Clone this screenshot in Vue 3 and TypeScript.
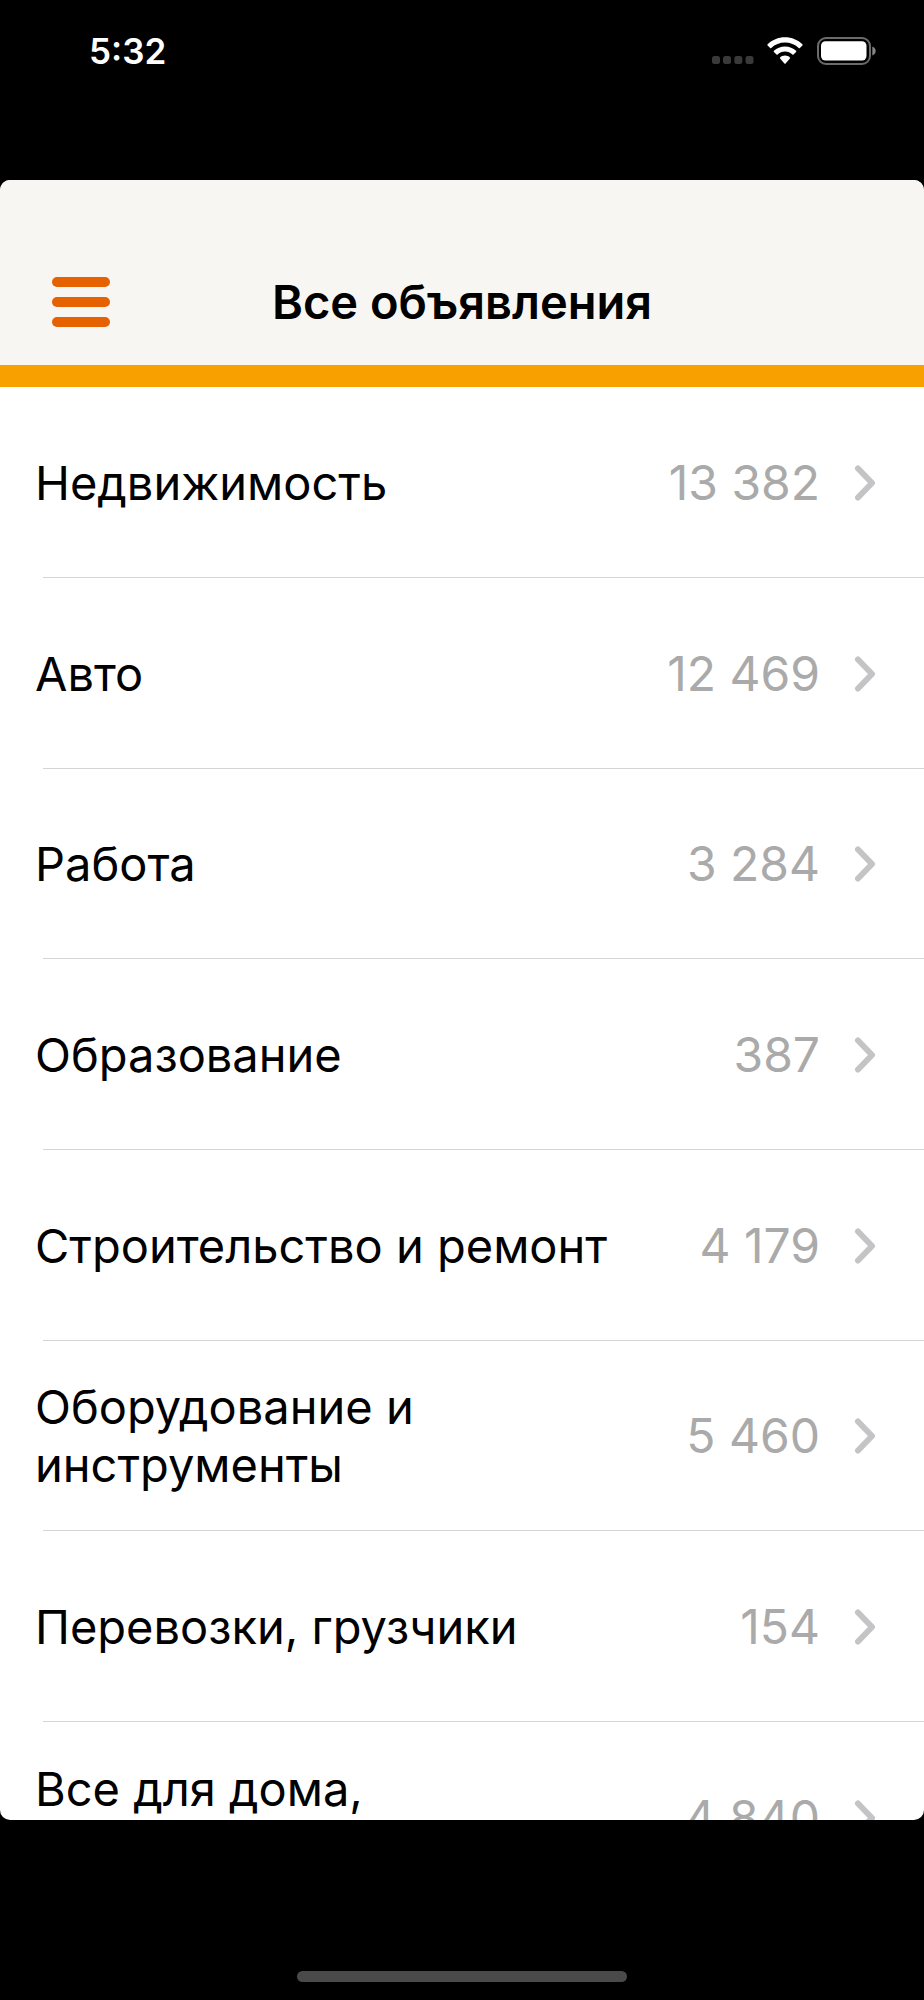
<script setup lang="ts">
interface Category {
  title: string
  count: string
  tall?: boolean
}

const categories: Category[] = [
  { title: 'Недвижимость', count: '13 382' },
  { title: 'Авто', count: '12 469' },
  { title: 'Работа', count: '3 284' },
  { title: 'Образование', count: '387' },
  { title: 'Строительство и ремонт', count: '4 179' },
  { title: 'Оборудование и инструменты', count: '5 460' },
  { title: 'Перевозки, грузчики', count: '154' },
  { title: 'Все для дома,', count: '4 840', tall: true },
]
</script>

<template>
  <div class="screen">
    <div class="status">
      <time class="clock">5:32</time>
      <div class="indicators">
        <svg class="dots" width="42" height="28" viewBox="0 0 42 28" aria-hidden="true">
          <rect x="0" y="19" width="8" height="8" rx="2.5" />
          <rect x="11" y="19" width="8" height="8" rx="2.5" />
          <rect x="22.3" y="19" width="8" height="8" rx="2.5" />
          <rect x="33.5" y="19" width="8" height="8" rx="2.5" />
        </svg>
        <svg class="wifi" width="36" height="28" viewBox="0 0 36 28" aria-hidden="true">
          <path d="M18 0.3C24.8 0.3 31 3 35.4 7.3Q35.9 7.9 35.4 8.4L32.9 10.9Q32.3 11.4 31.7 10.9C28 7.4 23.2 5.5 18 5.5S8 7.4 4.3 10.9Q3.7 11.4 3.1 10.9L0.6 8.4Q0.1 7.9 0.6 7.3C5 3 11.2 0.3 18 0.3Z" />
          <path d="M18 9.4C22.4 9.4 26.2 11.1 29.1 13.8Q29.6 14.4 29.1 15L26.5 17.5Q26 18 25.4 17.5C23.4 15.7 20.9 14.6 18 14.6S12.6 15.7 10.6 17.5Q10 18 9.5 17.5L6.9 15Q6.4 14.4 6.9 13.8C9.8 11.1 13.6 9.4 18 9.4Z" />
          <path d="M18 18.6C20 18.6 21.7 19.3 22.9 20.4Q23.4 21 22.9 21.6L18.6 26.4Q18 27 17.4 26.4L13.1 21.6Q12.6 21 13.1 20.4C14.3 19.3 16 18.6 18 18.6Z" />
        </svg>
        <svg class="battery" width="60" height="28" viewBox="0 0 60 28" aria-hidden="true">
          <rect x="1" y="1" width="52" height="26" rx="8" fill="none" stroke="#6b6b6b" stroke-width="2" />
          <rect x="4" y="4.3" width="45.5" height="19.3" rx="4.5" fill="#fff" />
          <path d="M55.3 9.5C57.3 10.3 58.7 12 58.7 14S57.3 17.7 55.3 18.5Z" fill="#858585" />
        </svg>
      </div>
    </div>

    <main class="sheet">
      <header class="bar">
        <button class="menu" type="button" aria-label="Меню">
          <span></span><span></span><span></span>
        </button>
        <h1>Все объявления</h1>
      </header>
      <ul class="list">
        <li v-for="c in categories" :key="c.title">
          <a class="row" href="#">
            <span class="label" :class="{ tall: c.tall }">{{ c.title }}</span>
            <span class="count">{{ c.count }}</span>
            <svg class="chevron" width="22" height="36" viewBox="0 0 22 36" aria-hidden="true">
              <path d="M4 3.5L18 18L4 32.5" />
            </svg>
          </a>
        </li>
      </ul>
    </main>

    <div class="bottom"><div class="home"></div></div>
  </div>
</template>

<style>
body {
  margin: 0;
  background: #000;
}
</style>

<style scoped>
.screen {
  display: flex;
  flex-direction: column;
  height: 100vh;
  background: #000;
  color: #000;
  font-family: Inter, "Liberation Sans", sans-serif;
}
.status {
  flex: none;
  box-sizing: border-box;
  height: 180px;
  padding: 30px 47px 0 89px;
  display: flex;
  justify-content: space-between;
  align-items: flex-start;
  color: #fff;
}
.clock {
  font-size: 35px;
  line-height: 42px;
  font-weight: 600;
}
.indicators {
  display: flex;
  align-items: center;
  padding-top: 7px;
}
.dots {
  fill: #3a3a3a;
  margin-right: 13px;
}
.wifi {
  fill: #fff;
  margin-right: 14px;
}
.sheet {
  flex: 1;
  min-height: 0;
  overflow: hidden;
  background: #fff;
  border-radius: 10px;
}
.bar {
  box-sizing: border-box;
  height: 207px;
  padding: 58px 44px 0;
  border-bottom: 22px solid #f7a000;
  background: #f8f6f2;
  display: grid;
  grid-template-columns: 74px 1fr 74px;
  align-items: center;
}
.menu {
  width: 74px;
  height: 68px;
  padding: 8px;
  border: 0;
  background: none;
  display: flex;
  flex-direction: column;
  justify-content: center;
  gap: 10px;
}
.menu span {
  width: 58px;
  height: 10px;
  border-radius: 5px;
  background: #e66100;
}
h1 {
  margin: 0;
  text-align: center;
  font-size: 47px;
  line-height: 58px;
  font-weight: 600;
}
.list {
  margin: 0;
  padding: 0;
  list-style: none;
  display: grid;
  grid-auto-rows: 191px 191px 190px;
}
.list li {
  display: grid;
  background: linear-gradient(#d4d4d6, #d4d4d6) 43px 100% / 100% 1px no-repeat;
}
.row {
  display: flex;
  align-items: center;
  padding: 0 48px 0 35px;
  color: inherit;
  text-decoration: none;
  font-size: 48px;
  line-height: 58px;
}
.label {
  flex: 1;
  font-size: 47px;
}
.tall {
  min-height: 116px;
}
.count {
  margin: 0 34px;
  color: #aaa;
  white-space: nowrap;
}
.chevron {
  flex: none;
  fill: none;
  stroke: #c4c4c6;
  stroke-width: 6;
  stroke-linecap: round;
  stroke-linejoin: round;
}
.bottom {
  flex: none;
  box-sizing: border-box;
  height: 180px;
  padding-bottom: 18px;
  display: flex;
  justify-content: center;
  align-items: flex-end;
}
.home {
  width: 330px;
  height: 11px;
  border-radius: 6px;
  background: #4a4a4a;
}
</style>
